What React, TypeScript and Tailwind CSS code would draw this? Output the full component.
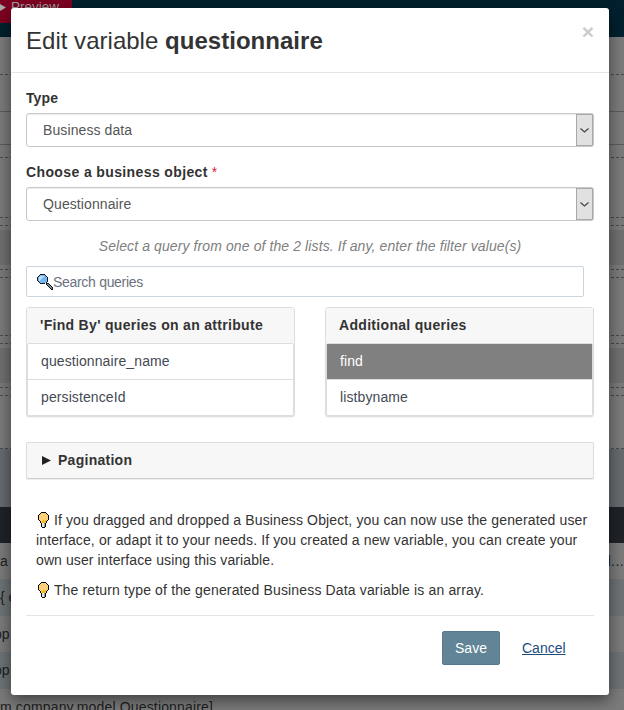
import React from "react";

const dashed = "border-[#4b4b4b] border-dashed";

function Bulb() {
  return (
    <svg className="inline-block h-4 w-[14px] align-[-3px]" viewBox="0 0 14 16" shapeRendering="crispEdges">
      <path d="M5 0h5v1h1v1h1v1h1v5h-1v1h-1v2h-1v4H9v1H6v-1H5v-4H4V9H3V8H2V3h1V2h1V1h1z" fill="#050505" />
      <path d="M5 1h5v1h1v1h1v5h-1v1h-1v2H5V9H4V8H3V3h1V2h1z" fill="#ffd176" />
      <path d="M6 9h1V8h1v1h1V8h1v2H9v1H6z" fill="#f6b70b" />
      <path d="M6 11h3v4H6z" fill="#e5e8ed" />
      <path d="M8 11h1v4H8z" fill="#9299a2" />
    </svg>
  );
}

function Magnifier() {
  return (
    <svg className="h-4 w-4 shrink-0" viewBox="0 0 16 16" shapeRendering="crispEdges">
      <path d="M3 0h5v1h1v1h1v1h1v5h-1v1h2v1h1v1h1v1h1v1h1v3h-2v-1h-1v-1h-1v-1h-1v-1h-1v-1H9V9H8v1H3V9H2V8H1V7H0V3h1V2h1V1h1z" fill="#101b25" />
      <path d="M3 1h5v1h1v1h1v5H9v1H3V8H2V7H1V3h1V2h1z" fill="#74b8ed" />
      <path d="M3 2h4v1H6v1H5v1H4v1H3v1H2V3h1z" fill="#b7dcfb" />
      <path d="M10 10h2v1h1v1h1v1h1v2h-1v-1h-1v-1h-1v-1h-1v-1h-1z" fill="#78898d" />
    </svg>
  );
}

function Select({ value }: { value: string }) {
  return (
    <div className="flex h-[34px] rounded-[3px] border border-[#c8c8c8] bg-white shadow-[inset_0_1px_1px_rgba(0,0,0,0.075)]">
      <span className="flex-1 pl-4 leading-8 tracking-[0.1px] text-[#555]">{value}</span>
      <span className="flex w-[17px] items-center justify-center border border-[#a9a9a9] bg-[#e1e1e1]">
        <svg className="h-[5px] w-[9px] shrink-0" viewBox="0 0 9 5" fill="none" stroke="#454545" strokeWidth="1.2">
          <path d="M.5 .5l4 3.5 4-3.5" />
        </svg>
      </span>
    </div>
  );
}

function QueryList({ title, items, selected }: { title: string; items: string[]; selected?: string }) {
  return (
    <div className="h-[110px] w-[269px] rounded-[3px] border border-[#ddd] bg-white shadow-[0_1px_1px_rgba(0,0,0,0.05)]">
      <div className="h-[35px] rounded-t-[2px] bg-[#f7f7f7] pl-[13px] font-bold leading-[35px] tracking-[0.31px]">{title}</div>
      <div className="h-[73px] rounded-[2px] border border-[#ddd]">
        {items.map((item) => (
          <div
            key={item}
            className={
              (item === selected ? "bg-[#808080] text-white" : "text-[#444a54]") +
              " h-9 border-b border-[#ddd] pl-[13px] leading-[34px] tracking-[0.1px] last:h-[35px] last:border-0"
            }
          >
            {item}
          </div>
        ))}
      </div>
    </div>
  );
}

function Page() {
  return (
    <div className="flex h-[710px] flex-col bg-[#7b7b7b] text-[14px] text-[#202020]">
      <div className="h-[37px] shrink-0 bg-[#02202e]">
        <div className="h-[23px] w-[72px] whitespace-nowrap bg-[#7d0020] text-[13.5px] leading-[14px] text-[#a0a0a0]">
          <svg className="mr-[5px] inline h-[7px] w-[6px] align-[0px]" viewBox="0 0 6 7"><path d="M0 0l6 3.5L0 7z" fill="#aaa" /></svg>Preview
        </div>
      </div>
      <div className={"h-[38px] shrink-0 border-b " + dashed} />
      <div className="h-[37px] shrink-0 border-b border-[#5b5b5b]" />
      <div className="h-[33px] shrink-0 border-b border-[#5b5b5b]" />
      <div className={"h-[13px] shrink-0 border-b " + dashed} />
      <div className={"h-[60px] shrink-0 border-b " + dashed} />
      <div className={"h-2 shrink-0 border-b " + dashed} />
      <div className="h-1 shrink-0" />
      <div className="h-[35px] shrink-0 bg-[#707070]" />
      <div className={"h-[5px] shrink-0 border-b " + dashed} />
      <div className={"h-2 shrink-0 border-b " + dashed} />
      <div className={"h-[58px] shrink-0 border-b " + dashed} />
      <div className={"h-2 shrink-0 border-b " + dashed} />
      <div className="h-1 shrink-0" />
      <div className="h-[35px] shrink-0 bg-[#707070]" />
      <div className={"h-[5px] shrink-0 border-b " + dashed} />
      <div className={"h-2 shrink-0 border-b " + dashed} />
      <div className={"h-[53px] shrink-0 border-b " + dashed} />
      <div className="h-[58px] shrink-0 bg-[#666b70]" />
      <div className="h-9 shrink-0 bg-[#1f2329]" />
      <div className="flex h-9 shrink-0 justify-between leading-9">
        <span className="-ml-1">ta</span><span className="tracking-[0.4px]">d...</span>
      </div>
      <div className="h-[37px] shrink-0 bg-[#6d7376] leading-[37px]">{"{ e"}</div>
      <div className="h-9 shrink-0 leading-9"><span className="-ml-1.5">pp</span></div>
      <div className="h-[37px] shrink-0 bg-[#6d7376] leading-[37px]"><span className="-ml-1.5">pp</span></div>
      <div className="h-[21px] shrink-0 leading-9"><span className="-ml-2 tracking-[0.16px]">om.company.model.Questionnaire]</span></div>
    </div>
  );
}

export default function App() {
  return (
    <div className="relative h-[710px] w-[624px] overflow-hidden font-['Liberation_Sans',Arial,sans-serif] text-[14px] text-[#333]">
      <Page />
      <div className="absolute left-[11px] top-2 flex h-[687px] w-[598px] flex-col rounded-[3px] bg-white shadow-[0_5px_15px_rgba(0,0,0,0.5)]">
        <header className="flex h-[65px] shrink-0 items-start justify-between border-b border-[#e5e5e5] px-[15px]">
          <h1 className="pt-[15px] text-[24px] leading-[36px]">
            <span className="tracking-[0.02px]">Edit variable </span><b className="tracking-[0.03px]">questionnaire</b>
          </h1>
          <button className="pt-[13px] text-[21px] font-bold leading-[21px] text-[#ccc]">×</button>
        </header>
        <main className="flex flex-col px-[15px] pt-[15px]">
          <label className="h-[25px] font-bold leading-5 tracking-[0.1px]">Type</label>
          <Select value="Business data" />
          <label className="mt-[15px] h-[25px] font-bold leading-5 tracking-[0.38px]">Choose a business object<span className="ml-1 font-normal text-[#d9213d]">*</span></label>
          <Select value="Questionnaire" />
          <p className="mt-[15px] h-5 text-center italic leading-5 text-[#808080]"><span className="tracking-[0.1px]">Select a query from one of the 2 lists. If any, enter the filter value(s)</span></p>
          <div className="mt-[10px] flex h-[31px] w-[558px] items-center rounded-[2px] border border-[#cbd5e0] pl-[10px] text-[#6b7280]">
            <Magnifier /><span className="pt-px tracking-[-0.3px]">Search queries</span>
          </div>
          <div className="mt-[10px] flex justify-between">
            <QueryList title="'Find By' queries on an attribute" items={["questionnaire_name", "persistenceId"]} />
            <QueryList title="Additional queries" items={["find", "listbyname"]} selected="find" />
          </div>
          <div className="mt-[25px] flex h-[37px] items-center rounded-[2px] border border-[#ddd] border-b-[#d0d0d0] bg-[#f7f7f7] pl-[15px] font-bold leading-[20px] shadow-[0_1px_1px_rgba(0,0,0,0.08)]">
            <svg className="mr-[7px] h-[9px] w-[9px]" viewBox="0 0 9 9"><path d="M0 0l9 4.5L0 9z" fill="#222" /></svg>
            <span className="-mt-px tracking-[0.27px]">Pagination</span>
          </div>
          <div className="mt-[31px] h-[106px] border-b border-[#e5e5e5] pl-[10px] leading-5">
            <p className="whitespace-nowrap">
              <Bulb /> <span className="tracking-[0.13px]">If you dragged and dropped a Business Object, you can now use the generated user</span><br />
              <span className="tracking-[0.13px]">interface, or adapt it to your needs. If you created a new variable, you can create your</span><br />
              <span className="tracking-[0.1px]">own user interface using this variable.</span>
            </p>
            <p className="mt-[10px] whitespace-nowrap"><Bulb /> <span className="tracking-[0.15px]">The return type of the generated Business Data variable is an array.</span></p>
          </div>
          <footer className="flex items-center gap-[22px] pl-[416px] pt-[15px]">
            <button className="h-[34px] w-[58px] rounded-[2px] border border-[#557b8e] bg-[#618597] text-white">Save</button>
            <button className="text-[#204d7d] underline">Cancel</button>
          </footer>
        </main>
      </div>
    </div>
  );
}
